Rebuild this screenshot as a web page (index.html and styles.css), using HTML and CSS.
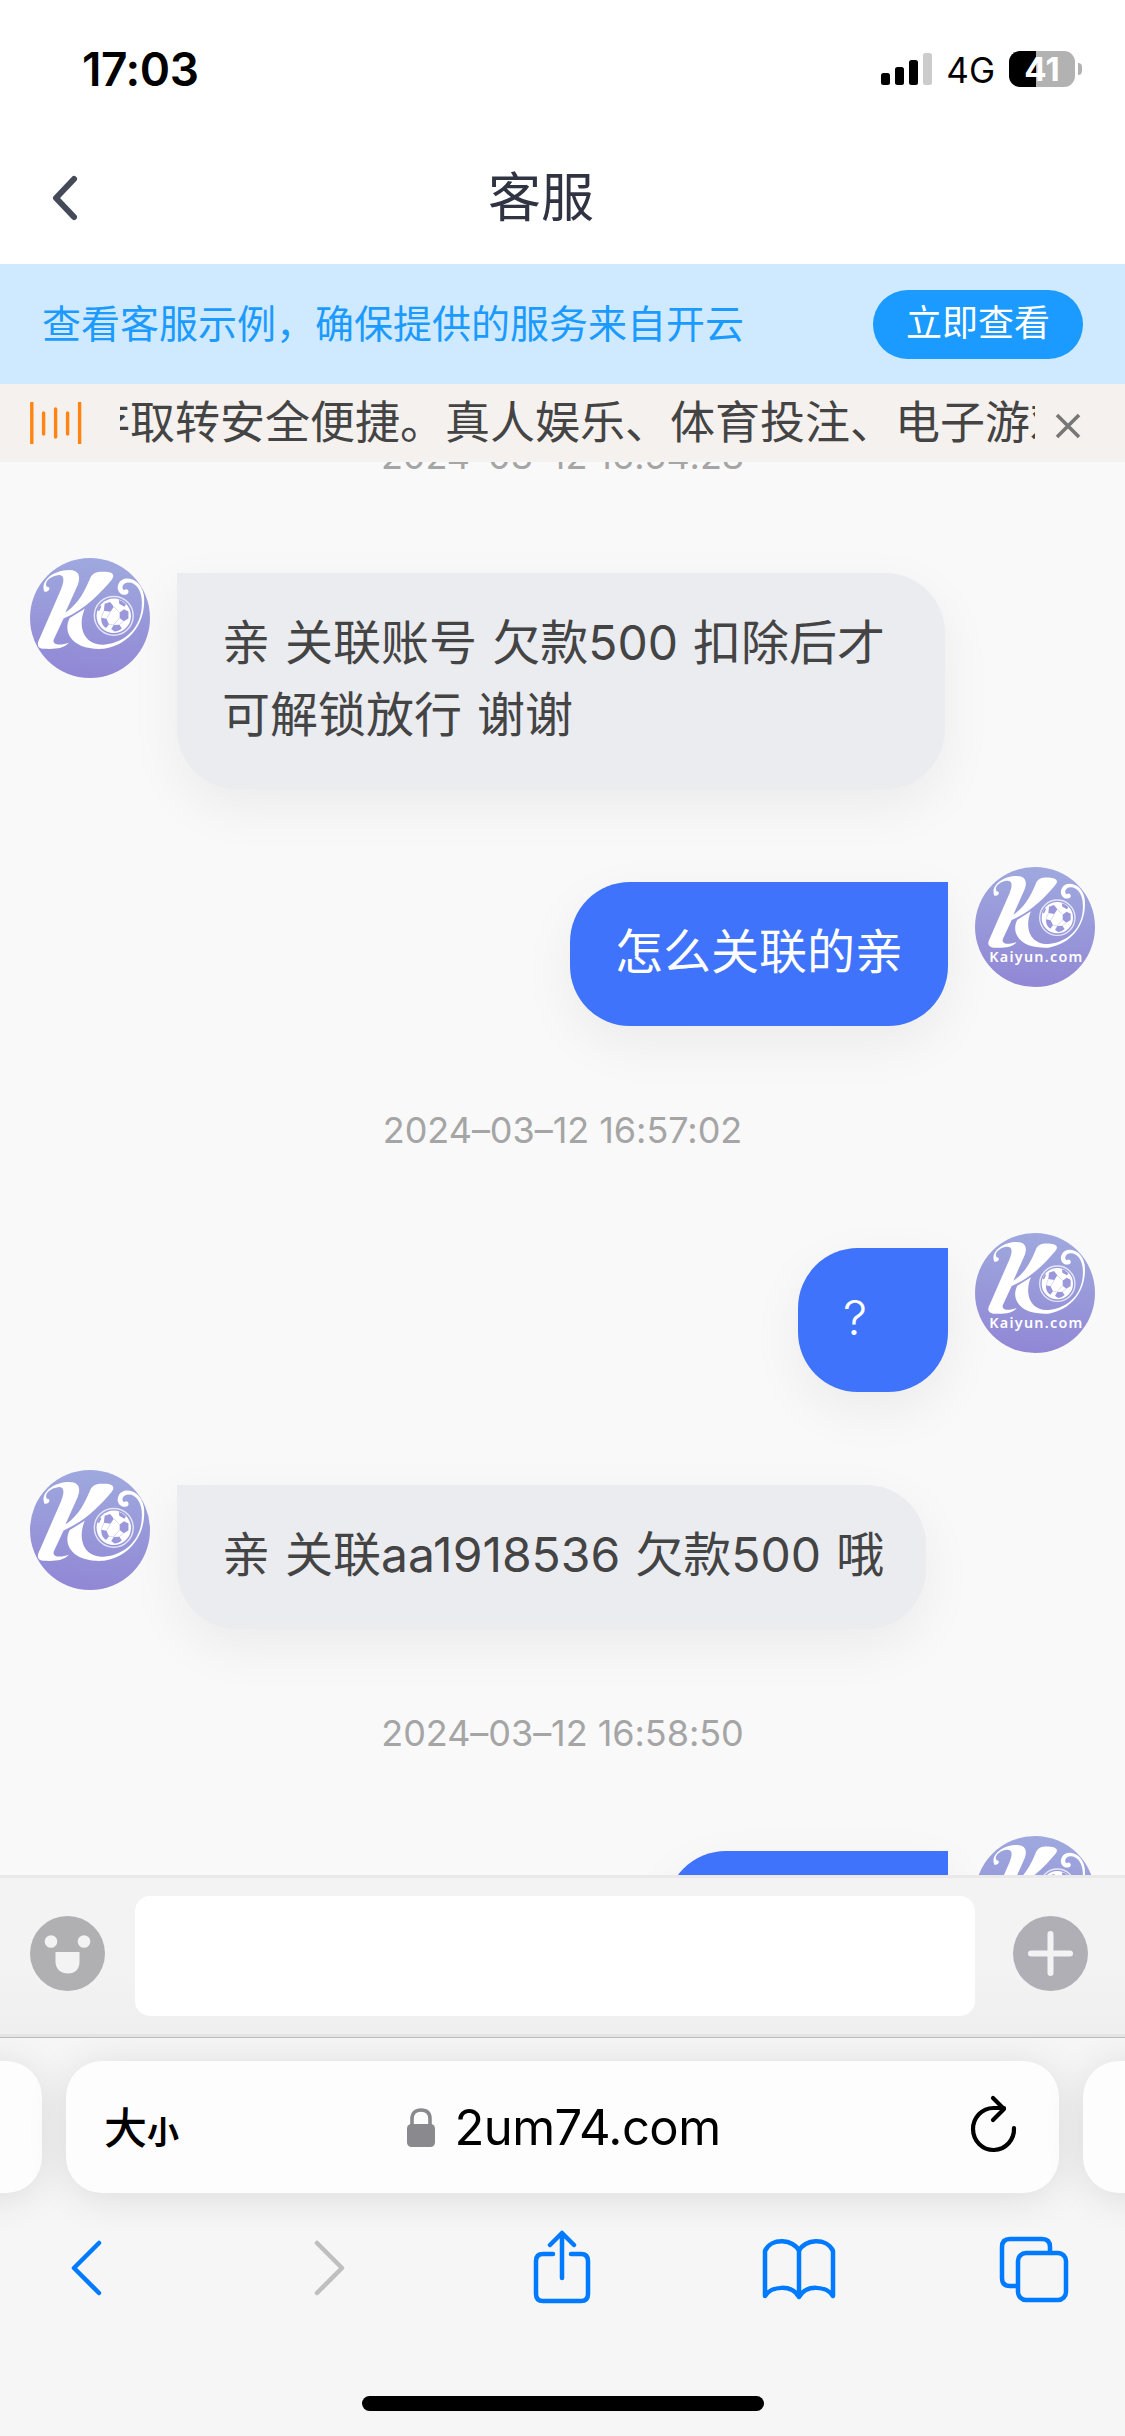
FILE: index.html
```html
<!DOCTYPE html>
<html lang="zh-CN">
<head>
<meta charset="utf-8">
<title>客服</title>
<link rel="stylesheet" href="styles.css">
</head>
<body>
<svg class="defs" width="0" height="0" aria-hidden="true">
  <defs>
    <linearGradient id="avatar-fill" x1="0.55" y1="0" x2="0.45" y2="1">
      <stop offset="0" stop-color="#9fa9de"/>
      <stop offset="1" stop-color="#9187d5"/>
    </linearGradient>
    <g id="mark" transform="translate(-15 -15)">
      <path fill="#fff" d="M73 101C60 72 98 42 140 42C168 42 172 60 164 82L130 158C168 134 186 92 197 66C205 45 222 46 242 47C264 49 264 60 256 69C226 104 186 148 125 174L99 230C92 246 115 250 140 240C125 258 100 258 70 257C52 255 52 243 60 228L118 95C130 65 125 55 110 56C90 58 70 75 80 88C92 88 86 104 73 101Z"/>
      <path fill="#fff" d="M183 148C164 190 175 247 235 246C300 240 345 190 338 120C336 95 320 74 300 76C285 78 282 92 290 97C300 89 308 104 297 109C280 114 267 95 275 80C285 55 335 60 344 110C352 180 310 245 235 257C146 262 122 210 142 173Z"/>
      <circle cx="262" cy="167" r="53" fill="none" stroke="#fff" stroke-width="4" opacity=".75"/>
      <circle cx="262" cy="167" r="47" fill="#fff"/>
      <g fill="#9a97da">
        <path d="M237 134l15-5 10 13-9 14-18-3zM278 158l12-9 12 6v19l-13 8-11-9zM228 172l14 3 7 15-8 10c-9-5-14-15-13-28zM262 192l15-1 7 10c-6 6-14 9-20 9l-9-7zM276 124c8 2 14 6 19 12l-4 6-14-8z"/>
        <path d="M217 152l8-14 3 4-6 12z"/>
      </g>
      <path d="M262 142l16 16M235 153l-7 19M249 190l13 2M242 175l11-19M277 191l12-9M278 173l-17 19" stroke="#c9c9ee" stroke-width="2"/>
    </g>
    <symbol id="avatar-agent" viewBox="0 0 360 360">
      <circle cx="180" cy="180" r="180" fill="url(#avatar-fill)"/>
      <g transform="translate(-20.4 6.3) scale(1.1)"><use href="#mark"/></g>
    </symbol>
    <symbol id="avatar-user" viewBox="0 0 360 360">
      <circle cx="180" cy="180" r="180" fill="url(#avatar-fill)"/>
      <use href="#mark"/>
      <text class="avatar-text" x="43" y="286" textLength="279">Kaiyun.com</text>
    </symbol>
  </defs>
</svg>
<div class="phone">
  <header class="status">
    <span class="clock">17:03</span>
    <div class="indicators">
      <svg class="signal" width="51" height="33" viewBox="0 0 51 33">
        <rect x="0" y="20" width="9" height="12" rx="2.5"/>
        <rect x="14" y="14" width="9" height="18" rx="2.5"/>
        <rect x="28" y="7" width="9" height="25" rx="2.5"/>
        <rect x="42" y="0" width="9" height="32" rx="2.5" fill="#ccc"/>
      </svg>
      <span class="network">4G</span>
      <div class="battery"><span class="battery-level">41</span></div>
      <i class="battery-tip"></i>
    </div>
  </header>

  <nav class="titlebar">
    <svg class="back" width="30" height="48" viewBox="0 0 30 48"><path d="M25 5L7 24L25 43"/></svg>
    <h1>客服</h1>
  </nav>

  <section class="banner">
    <span>查看客服示例，确保提供的服务来自开云</span>
    <button>立即查看</button>
  </section>

  <section class="notice">
    <svg class="sound" width="54" height="42" viewBox="0 0 54 42"><path d="M1.8 1V41M13.6 11V32M25.6 7V35M37.6 11V32M49.6 1V41"/></svg>
    <div class="ticker"><p>存取转安全便捷。真人娱乐、体育投注、电子游戏</p></div>
    <svg class="close" width="26" height="28" viewBox="0 0 26 28"><path d="M2 3L24 25M24 3L2 25"/></svg>
  </section>

  <main class="chat">
    <time class="first-time">2024–03–12 16:54:28</time>
    <article class="msg agent">
      <svg class="avatar"><use href="#avatar-agent"/></svg>
      <p class="bubble">亲 关联账号 欠款500 扣除后才<br>可解锁放行 谢谢</p>
    </article>
    <article class="msg user">
      <p class="bubble">怎么关联的亲</p>
      <svg class="avatar"><use href="#avatar-user"/></svg>
    </article>
    <time>2024–03–12 16:57:02</time>
    <article class="msg user">
      <p class="bubble short">?</p>
      <svg class="avatar"><use href="#avatar-user"/></svg>
    </article>
    <article class="msg agent">
      <svg class="avatar"><use href="#avatar-agent"/></svg>
      <p class="bubble one">亲 关联aa1918536 欠款500 哦</p>
    </article>
    <time>2024–03–12 16:58:50</time>
    <article class="msg user">
      <p class="bubble cut"></p>
      <svg class="avatar"><use href="#avatar-user"/></svg>
    </article>
  </main>

  <section class="composer">
    <svg width="75" height="75" viewBox="0 0 75 75">
      <circle cx="37.5" cy="37.5" r="37.5" fill="#b0b0b3"/>
      <g fill="#f3f3f3"><circle cx="21" cy="25.5" r="6.3"/><circle cx="54" cy="25.5" r="6.3"/><path d="M25.5 36H49.5V46C49.5 53 45 57.5 38 57.5S25.5 53 25.5 46Z"/></g>
    </svg>
    <div class="field"></div>
    <svg width="75" height="75" viewBox="0 0 75 75">
      <circle cx="37.5" cy="37.5" r="37.5" fill="#b0afb6"/>
      <path d="M37.5 18V57M18 37.5H57" stroke="#f3f3f3" stroke-width="6" stroke-linecap="round"/>
    </svg>
  </section>

  <footer class="browser">
    <div class="tabs">
      <div class="tab"></div>
      <div class="tab address">
        <span class="size">大<small>小</small></span>
        <div class="host">
          <svg width="28" height="40" viewBox="0 0 28 40"><rect x="0" y="16" width="28" height="23" rx="4.5" fill="#8a8a8e"/><path d="M5 18V11C5 5 8.500 2 14 2S23 5 23 11V18" fill="none" stroke="#8a8a8e" stroke-width="3.600"/></svg>
          <span>2um74.com</span>
        </div>
        <svg class="reload" width="48" height="58" viewBox="0 0 48 58"><path d="M44 33A20.500 21 0 1 1 23.500 13H34M23 3L34 14L23 25"/></svg>
      </div>
      <div class="tab"></div>
    </div>
    <div class="tools">
      <svg viewBox="0 0 70 76"><path d="M31 12L6 37L31 62"/></svg>
      <svg viewBox="0 0 70 76" class="off"><path d="M16 12L41 37L16 62"/></svg>
      <svg viewBox="0 0 70 76"><path d="M19 23H9Q2 23 2 30V63Q2 70 9 70H47Q54 70 54 63V30Q54 23 47 23H37M28 47V3M16 14L28 2L40 14"/></svg>
      <svg viewBox="0 0 70 76"><path d="M32 20C27 8 4 6 -2 20V65C4 55 25 53 32 66C39 53 60 55 66 65V20C60 6 37 8 32 20V66"/></svg>
      <svg viewBox="0 0 70 76"><rect x="18" y="22" width="48" height="47" rx="8"/><path d="M16 55H10Q2 55 2 47V16Q2 8 10 8H42Q50 8 50 16V22"/></svg>
    </div>
    <div class="home"></div>
  </footer>
</div>
</body>
</html>
```
FILE: styles.css
```css
* { box-sizing: border-box; margin: 0; padding: 0; }
body { background: #fff; }
.defs { display: block; }
svg { flex: none; }
.phone {
  width: 1125px;
  height: 2436px;
  display: flex;
  flex-direction: column;
  overflow: hidden;
  background: #fff;
  font-family: Inter, "Noto Sans CJK SC", sans-serif;
  color: #444;
}

/* status bar */
.status {
  height: 132px;
  flex: none;
  display: flex;
  justify-content: space-between;
  padding: 42px 43px 0 82px;
  color: #000;
}
.clock { font-size: 46px; font-weight: 600; line-height: 54px; letter-spacing: -.4px; }
.indicators { display: flex; align-items: center; height: 54px; }
.network { font-size: 35px; line-height: 54px; margin: 2px 14px 0 14px; }
.signal { margin-top: 1px; }
.battery {
  width: 66px;
  height: 36px;
  border-radius: 11px;
  background: linear-gradient(90deg, #000 0 27px, #b2b2b2 27px);
  color: #fff;
  display: flex;
  align-items: center;
  justify-content: center;
}
.battery-level { font-size: 33px; font-weight: 700; line-height: 36px; }
.battery-tip { width: 4px; height: 12px; margin-left: 3px; background: #b2b2b2; border-radius: 0 4px 4px 0; }

/* title bar */
.titlebar {
  height: 132px;
  flex: none;
  display: flex;
  align-items: center;
  padding-left: 49px;
  color: #303442;
}
.back { fill: none; stroke: #454a59; stroke-width: 6; stroke-linecap: round; stroke-linejoin: round; }
.titlebar h1 { font-size: 53px; font-weight: 400; line-height: 80px; margin-left: 409px; }

/* banner */
.banner {
  height: 120px;
  flex: none;
  display: flex;
  justify-content: space-between;
  align-items: center;
  padding: 0 42px;
  background: #cfeaff;
  color: #1b9aff;
  font-size: 39px;
}
.banner span { padding-bottom: 7px; }
.banner button {
  width: 210px;
  height: 69px;
  border: 0;
  border-radius: 35px;
  padding-bottom: 3px;
  background: #1b9aff;
  color: #fff;
  font: 400 36px/66px Inter, "Noto Sans CJK SC", sans-serif;
}

/* scrolling notice */
.notice {
  height: 78px;
  flex: none;
  display: flex;
  align-items: center;
  padding: 0 43px 0 30px;
  background: #f5f1ee;
}
.sound { fill: none; stroke: #ff8412; stroke-width: 3.4; stroke-linecap: round; }
.ticker { width: 915px; margin-left: 36px; overflow: hidden; font-size: 45px; line-height: 78px; white-space: nowrap; }
.ticker p { margin-left: -35px; }
.close { margin: 6px 0 0 20px; fill: none; stroke: #777; stroke-width: 3.6; }

/* conversation */
.chat {
  height: 1413px;
  flex: none;
  overflow: hidden;
  display: flex;
  flex-direction: column;
  padding: 0 30px;
  background: #f9f9f9;
}
.chat time {
  display: block;
  flex: none;
  text-align: center;
  color: #a5a5a5;
  font-size: 36px;
  line-height: 54px;
  height: 207px;
  padding-top: 77px;
  letter-spacing: -.05px;
}
.chat .first-time { height: 96px; padding: 0; margin-top: -33px; margin-bottom: 33px; }
.msg { display: flex; gap: 27px; flex: none; align-items: flex-start; }
.msg.user { justify-content: flex-end; }
.msg.agent + .msg.user, .msg.user + .msg.agent { margin-top: 78px; }
.avatar { width: 120px; height: 120px; }
.avatar-text { font: 600 43px "Noto Sans", sans-serif; fill: #fff; }
.bubble {
  margin-top: 15px;
  padding: 34px 45px 38px;
  min-height: 144px;
  font-size: 48px;
  line-height: 72px;
  border-radius: 60px;
  white-space: nowrap;
  box-shadow: 0 18px 54px rgba(0, 0, 0, .06);
}
.agent .bubble { width: 768px; background: #ebecf0; border-top-left-radius: 0; word-spacing: 1.6px; }
.agent .one { width: 749px; }
.user .bubble { background: #3f73fb; color: #fff; border-top-right-radius: 0; }
.user .short { width: 150px; font-weight: 300; }
.cut { width: 282px; }

/* message input */
.composer {
  height: 162px;
  flex: none;
  display: flex;
  align-items: center;
  padding: 0 37px 0 30px;
  background: linear-gradient(#f3f3f3 60%, #efefef);
  border-top: 3px solid #e9e9e9;
  border-bottom: 3px solid #e4e4e4;
}
.composer svg { margin-bottom: 5px; }
.field { width: 840px; height: 120px; margin: 0 38px 0 30px; border-radius: 15px; background: #fff; }

/* browser bar */
.browser { flex: 1; background: #f6f6f6; border-top: 1px solid #bbb; overflow: hidden; }
.tabs { display: flex; gap: 24px; width: 1257px; height: 156px; margin-left: -66px; padding-top: 23px; }
.tab { flex: 0 0 108px; height: 132px; border-radius: 36px; background: #fdfdfd; box-shadow: 0 4px 40px rgba(0, 0, 0, .11); }
.address { flex: 0 0 993px; display: flex; align-items: center; justify-content: space-between; padding: 0 41px 0 38px; color: #000; }
.size { width: 54px; font: 500 43px/60px "Noto Sans CJK SC", sans-serif; white-space: nowrap; }
.size small { font-size: 32px; font-weight: 700; }
.host { display: flex; align-items: center; gap: 19px; margin-top: 2px; font-size: 49px; line-height: 60px; letter-spacing: -.55px; }
.reload { margin-top: -7px; fill: none; stroke: #000; stroke-width: 4.2; stroke-linecap: round; stroke-linejoin: round; }
.tools { display: flex; justify-content: space-between; height: 202px; padding: 37px 55px 0 68px; }
.tools svg { width: 70px; height: 76px; overflow: visible; fill: none; stroke: #007aff; stroke-width: 4.500; stroke-linecap: round; stroke-linejoin: round; }
.tools .off { stroke: #bfbfbf; }
.home { width: 402px; height: 15px; margin: 0 auto; border-radius: 8px; background: #000; }
```
